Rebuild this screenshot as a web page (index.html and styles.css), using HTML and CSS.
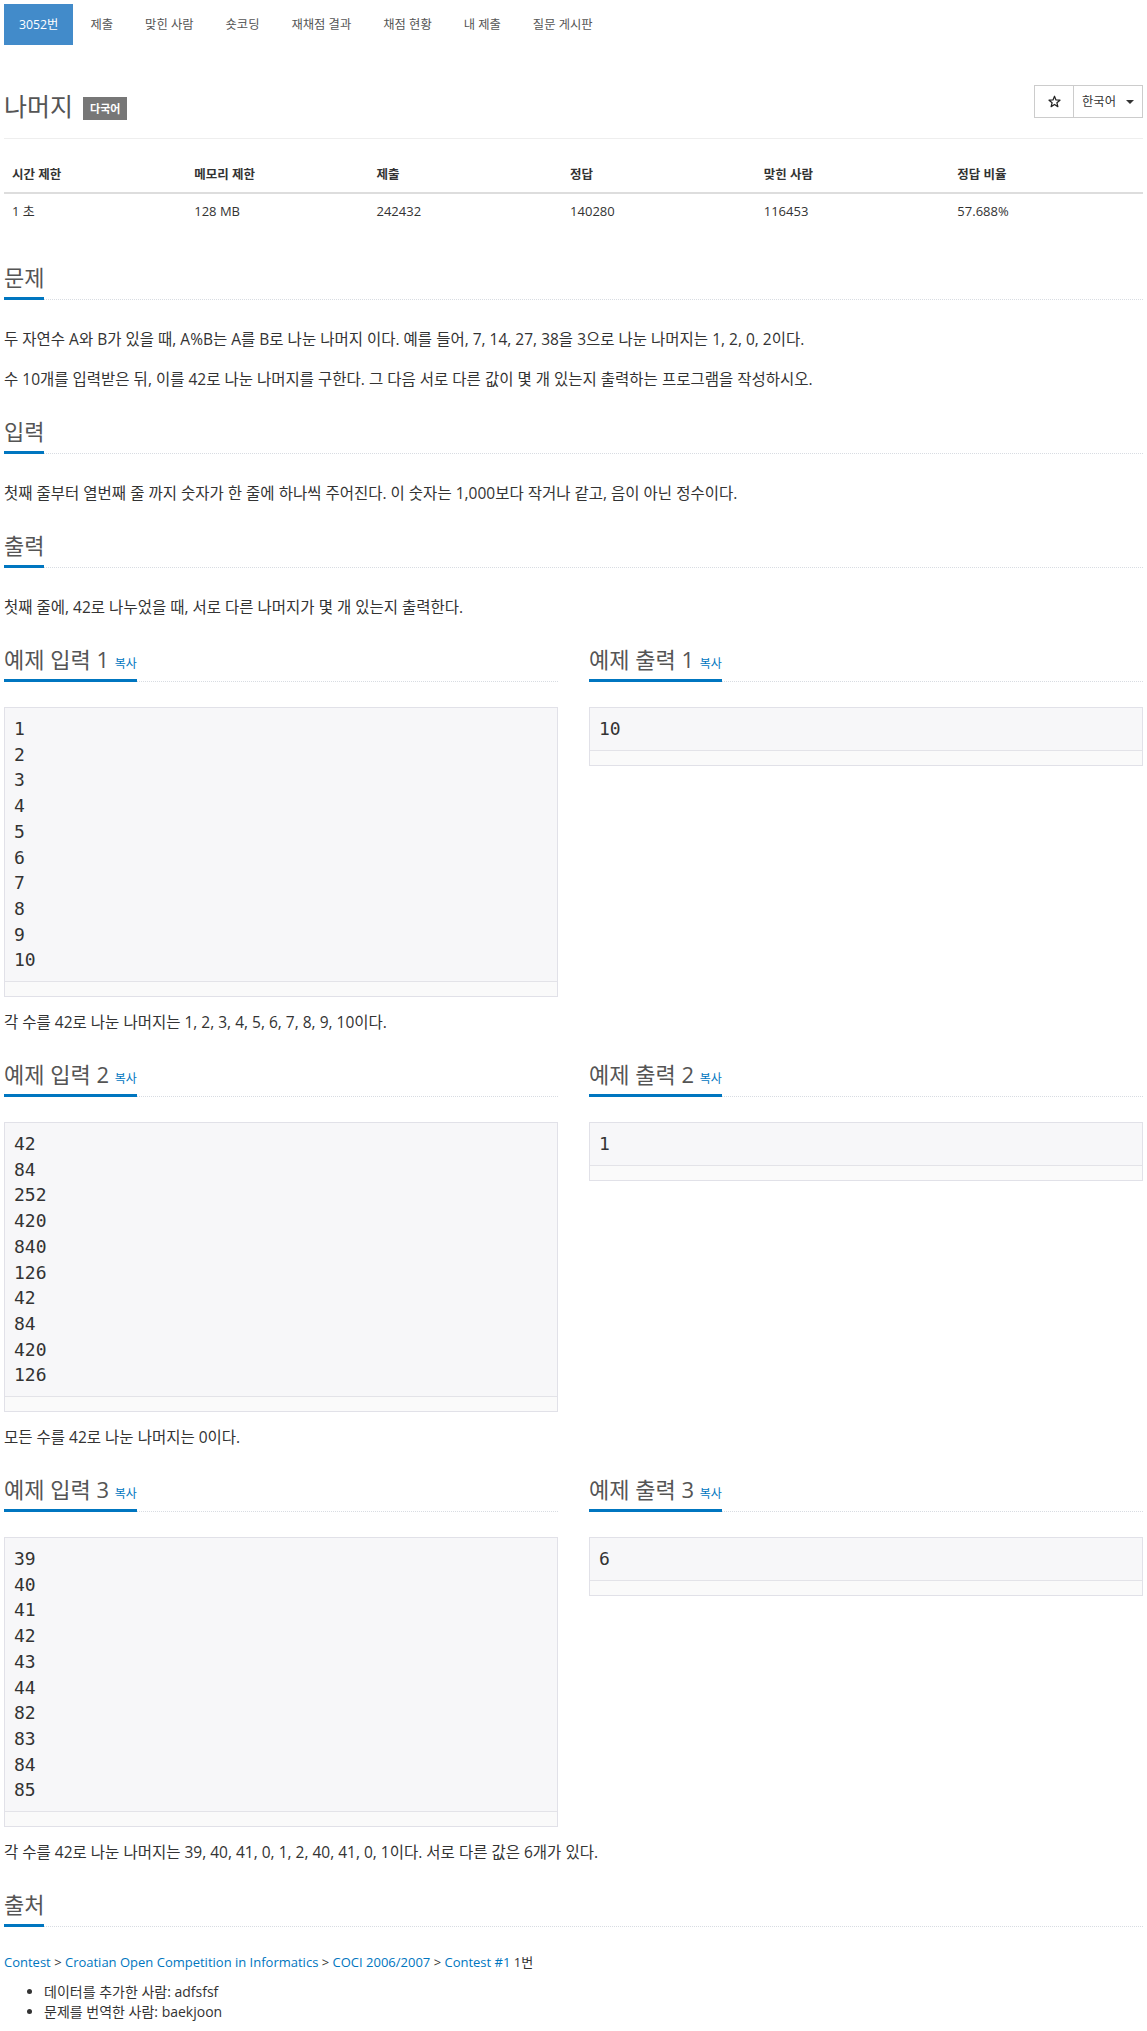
FILE: index.html
```html
<!DOCTYPE html>
<html lang="ko">
<head>
<meta charset="utf-8">
<title>3052번: 나머지</title>
<link rel="stylesheet" href="styles.css">
</head>
<body>
<div class="page">
  <ul class="nav">
    <li class="active"><a href="#">3052번</a></li>
    <li><a href="#">제출</a></li>
    <li><a href="#">맞힌 사람</a></li>
    <li><a href="#">숏코딩</a></li>
    <li><a href="#">재채점 결과</a></li>
    <li><a href="#">채점 현황</a></li>
    <li><a href="#">내 제출</a></li>
    <li><a href="#">질문 게시판</a></li>
  </ul>

  <div class="page-header">
    <h1 class="title"><span>나머지</span><span class="badge">다국어</span></h1>
    <div class="btn-group">
      <button class="btn star" type="button" aria-label="즐겨찾기"><svg class="star-icon" viewBox="0 0 14 14" width="13" height="13"><polygon points="7,1.3 8.59,5.32 12.9,5.58 9.57,8.33 10.64,12.52 7,10.2 3.36,12.52 4.43,8.33 1.1,5.58 5.41,5.32"/></svg></button>
      <button class="btn lang" type="button">한국어<span class="caret"></span></button>
    </div>
  </div>

  <table class="info">
    <thead>
      <tr>
        <th class="w16">시간 제한</th>
        <th class="w16">메모리 제한</th>
        <th class="w17">제출</th>
        <th class="w17">정답</th>
        <th class="w17">맞힌 사람</th>
        <th class="w17">정답 비율</th>
      </tr>
    </thead>
    <tbody>
      <tr>
        <td>1 초</td>
        <td>128 MB</td>
        <td>242432</td>
        <td>140280</td>
        <td>116453</td>
        <td>57.688%</td>
      </tr>
    </tbody>
  </table>

  <section class="sec">
    <div class="headline"><h2>문제</h2></div>
    <p class="ptext">두 자연수 A와 B가 있을 때, A%B는 A를 B로 나눈 나머지 이다. 예를 들어, 7, 14, 27, 38을 3으로 나눈 나머지는 1, 2, 0, 2이다.</p>
    <p class="ptext">수 10개를 입력받은 뒤, 이를 42로 나눈 나머지를 구한다. 그 다음 서로 다른 값이 몇 개 있는지 출력하는 프로그램을 작성하시오.</p>
  </section>

  <section class="sec">
    <div class="headline"><h2>입력</h2></div>
    <p class="ptext">첫째 줄부터 열번째 줄 까지 숫자가 한 줄에 하나씩 주어진다. 이 숫자는 1,000보다 작거나 같고, 음이 아닌 정수이다.</p>
  </section>

  <section class="sec">
    <div class="headline"><h2>출력</h2></div>
    <p class="ptext">첫째 줄에, 42로 나누었을 때, 서로 다른 나머지가 몇 개 있는지 출력한다.</p>
  </section>

  <div class="samples">
    <section class="sample">
      <div class="headline"><h2>예제 입력 1 <span class="copy">복사</span></h2></div>
      <div class="box"><pre>1
2
3
4
5
6
7
8
9
10</pre><div class="strip"></div></div>
    </section>
    <section class="sample">
      <div class="headline"><h2>예제 출력 1 <span class="copy">복사</span></h2></div>
      <div class="box"><pre>10</pre><div class="strip"></div></div>
    </section>
  </div>
  <p class="ptext explain">각 수를 42로 나눈 나머지는 1, 2, 3, 4, 5, 6, 7, 8, 9, 10이다.</p>

  <div class="samples">
    <section class="sample">
      <div class="headline"><h2>예제 입력 2 <span class="copy">복사</span></h2></div>
      <div class="box"><pre>42
84
252
420
840
126
42
84
420
126</pre><div class="strip"></div></div>
    </section>
    <section class="sample">
      <div class="headline"><h2>예제 출력 2 <span class="copy">복사</span></h2></div>
      <div class="box"><pre>1</pre><div class="strip"></div></div>
    </section>
  </div>
  <p class="ptext explain">모든 수를 42로 나눈 나머지는 0이다.</p>

  <div class="samples">
    <section class="sample">
      <div class="headline"><h2>예제 입력 3 <span class="copy">복사</span></h2></div>
      <div class="box"><pre>39
40
41
42
43
44
82
83
84
85</pre><div class="strip"></div></div>
    </section>
    <section class="sample">
      <div class="headline"><h2>예제 출력 3 <span class="copy">복사</span></h2></div>
      <div class="box"><pre>6</pre><div class="strip"></div></div>
    </section>
  </div>
  <p class="ptext explain">각 수를 42로 나눈 나머지는 39, 40, 41, 0, 1, 2, 40, 41, 0, 1이다. 서로 다른 값은 6개가 있다.</p>

  <section class="sec">
    <div class="headline"><h2>출처</h2></div>
    <p class="source"><a href="#">Contest</a> &gt; <a href="#">Croatian Open Competition in Informatics</a> &gt; <a href="#">COCI 2006/2007</a> &gt; <a href="#">Contest #1</a> 1번</p>
    <ul class="credits">
      <li>데이터를 추가한 사람: adfsfsf</li>
      <li>문제를 번역한 사람: baekjoon</li>
    </ul>
  </section>
</div>
</body>
</html>
```
FILE: styles.css
```css
* {
  box-sizing: border-box;
}

body {
  margin: 0;
  background: #fff;
  color: #333;
  font-family: "Open Sans", "Noto Sans CJK KR", sans-serif;
  font-size: 14px;
  line-height: 1.42857;
}

.page {
  display: flex;
  flex-direction: column;
  padding: 4px 4px 0;
}

/* nav pills */
.nav {
  list-style: none;
  margin: 0;
  padding: 0;
  display: flex;
}

.nav li + li {
  margin-left: 2px;
}

.nav a {
  display: block;
  padding: 10px 15px;
  font-size: 12.3px;
  line-height: 21px;
  color: #555;
  text-decoration: none;
}

.nav .active a {
  background: #428bca;
  color: #fff;
}

/* title */
.page-header {
  display: flex;
  justify-content: space-between;
  align-items: flex-start;
  margin-top: 47px;
  padding-bottom: 17px;
  border-bottom: 1px solid #eee;
  margin-bottom: 19px;
}

.title {
  margin: 0;
  display: flex;
  align-items: flex-start;
  font-size: 25px;
  line-height: 29px;
  font-weight: 400;
  color: #555;
}

.badge {
  margin: 5px 0 0 10px;
  background: #777;
  color: #fff;
  font-size: 11px;
  line-height: 11px;
  padding: 6px 7px;
  font-weight: 700;
}

.btn-group {
  display: flex;
  margin-top: -7px;
}

.btn {
  height: 33px;
  border: 1px solid #ccc;
  background: #fff;
  font-family: inherit;
  font-size: 12.3px;
  line-height: 19px;
  color: #333;
  display: flex;
  align-items: center;
}

.btn + .btn {
  margin-left: -1px;
}

.star {
  width: 40px;
  justify-content: center;
  padding: 0;
}

.star-icon {
  fill: none;
  stroke: #222;
  stroke-width: 1.3;
  stroke-linejoin: round;
}

.lang {
  padding: 6px 8px 6px 8px;
}

.caret {
  display: inline-block;
  width: 0;
  height: 0;
  border-top: 4px solid #333;
  border-left: 4px solid transparent;
  border-right: 4px solid transparent;
  margin-left: 10px;
}

/* info table */
.info {
  width: 100%;
  border-collapse: collapse;
  margin-bottom: 23px;
  font-size: 13px;
}

.info th,
.info td {
  padding: 8px;
  text-align: left;
  line-height: 18px;
  vertical-align: top;
}

.info th {
  font-size: 12.5px;
  font-weight: 700;
  border-bottom: 2px solid #ddd;
}

.info td {
  border-top: 1px solid #ddd;
}

.w16 {
  width: 16%;
}

.w17 {
  width: 17%;
}

/* headlines */
.headline {
  display: flex;
  margin: 14px 0 25px;
  border-bottom: 1px dotted #d8dce2;
}

.headline h2 {
  margin: 0 0 -1px;
  padding-bottom: 8px;
  border-bottom: 3px solid #0076c0;
  font-size: 22px;
  line-height: 24px;
  font-weight: 400;
  color: #555;
}

.copy {
  font-size: 12px;
  line-height: 1;
  color: #0076c0;
}

/* problem text */
.ptext {
  margin: 0 0 12px;
  font-size: 15.5px;
  line-height: 28px;
}

/* samples */
.samples {
  display: grid;
  grid-template-columns: 1fr 1fr;
  column-gap: 31px;
  align-items: start;
  margin-bottom: 11px;
}

.box {
  border: 1px solid #e1e1e8;
  background: #f7f7f9;
}

.box pre {
  margin: 0;
  padding: 8px 9px 8px;
  font-family: "DejaVu Sans Mono", monospace;
  font-size: 18px;
  line-height: 1.42857;
  color: #333;
}

.strip {
  height: 15px;
  border-top: 1px solid #e3e3e8;
  background: #fafafa;
}

/* source */
.source {
  margin: 0 0 10px;
  font-size: 13px;
  line-height: 20px;
}

.source a {
  color: #0076c0;
  text-decoration: none;
}

.credits {
  margin: 0 0 10px;
  padding-left: 40px;
  font-size: 14px;
  line-height: 20px;
}
```
